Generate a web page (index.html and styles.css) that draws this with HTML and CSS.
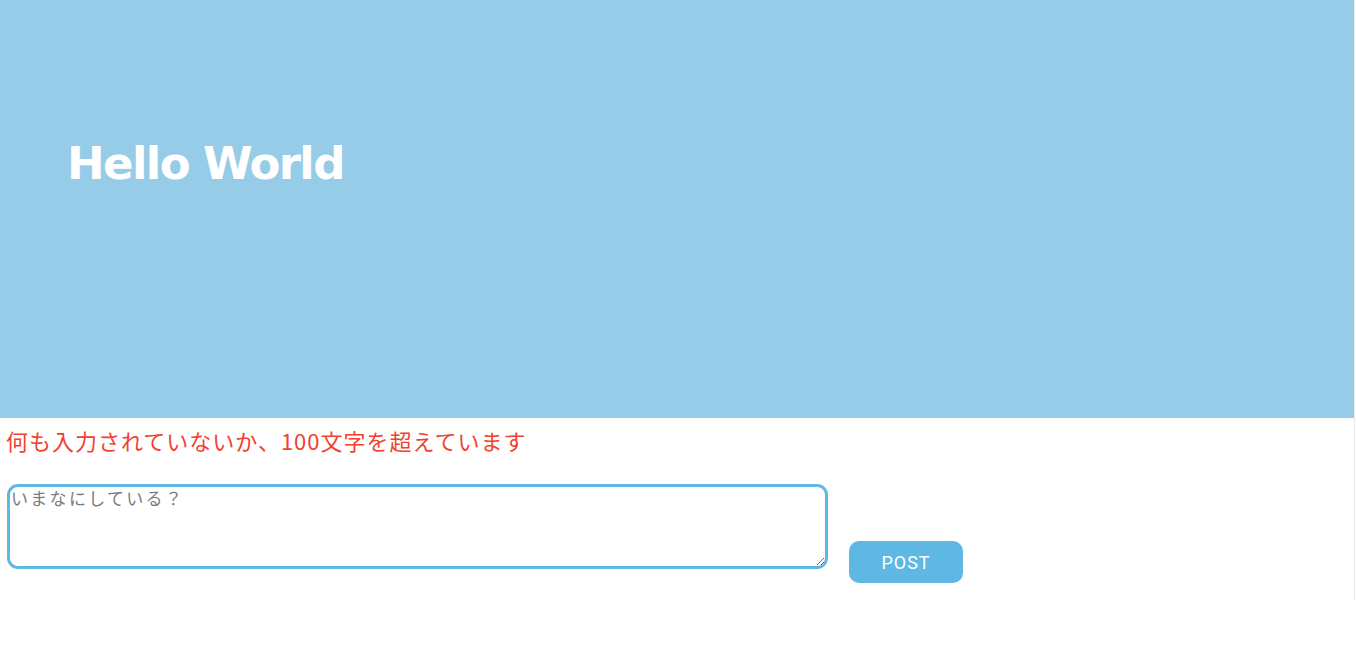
FILE: index.html
```html
<!DOCTYPE html>
<html lang="ja">
<head>
<meta charset="utf-8">
<title>Hello World</title>
<link rel="stylesheet" href="styles.css">
</head>
<body>
<div class="page">
  <header class="hero">
    <h1 class="hero-title">Hello World</h1>
  </header>
  <main class="content">
    <p class="error">何も入力されていないか、100文字を超えています</p>
    <form class="post-form">
      <textarea class="post-input" placeholder="いまなにしている？"></textarea>
      <button type="button" class="post-btn">POST</button>
    </form>
  </main>
</div>
</body>
</html>
```
FILE: styles.css
```css
html, body {
  margin: 0;
  padding: 0;
  background: #ffffff;
}
.page {
  width: 1355px;
  min-height: 600px;
  border-right: 1px solid #ececec;
  box-sizing: border-box;
}
.hero {
  height: 418px;
  background: #97cce8;
  display: flex;
  align-items: flex-start;
  padding: 0 0 0 67px;
  box-sizing: border-box;
}
.hero-title {
  margin: 136px 0 0 0;
  font-family: "DejaVu Sans", "Liberation Sans", sans-serif;
  font-weight: bold;
  font-size: 45px;
  line-height: 56px;
  color: #ffffff;
  letter-spacing: -1.6px;
}
.content {
  padding: 0 0 0 6px;
}
.error {
  margin: 0;
  padding-top: 7px;
  font-family: "Noto Sans CJK JP", sans-serif;
  font-size: 22px;
  line-height: 30px;
  letter-spacing: 1px;
  color: #f2412e;
}
.post-form {
  display: flex;
  align-items: flex-start;
  margin-top: 29px;
  gap: 21px;
}
.post-input {
  width: 821px;
  height: 85px;
  box-sizing: border-box;
  margin: 0 0 0 1px;
  border: 3px solid #60b7e2;
  border-radius: 11px;
  padding: 0 1px;
  font-family: "Noto Sans CJK JP", sans-serif;
  font-size: 17px;
  line-height: 21px;
  letter-spacing: 2.3px;
  color: #333;
  outline: none;
  resize: both;
}
.post-input::placeholder {
  color: #7a7a7a;
}
.post-btn {
  margin-top: 57px;
  width: 114px;
  height: 42px;
  border: none;
  border-radius: 10px;
  background: #5fb7e3;
  color: #ffffff;
  font-family: Roboto, "Liberation Sans", sans-serif;
  font-size: 18px;
  letter-spacing: 1px;
  padding: 0;
}
```
